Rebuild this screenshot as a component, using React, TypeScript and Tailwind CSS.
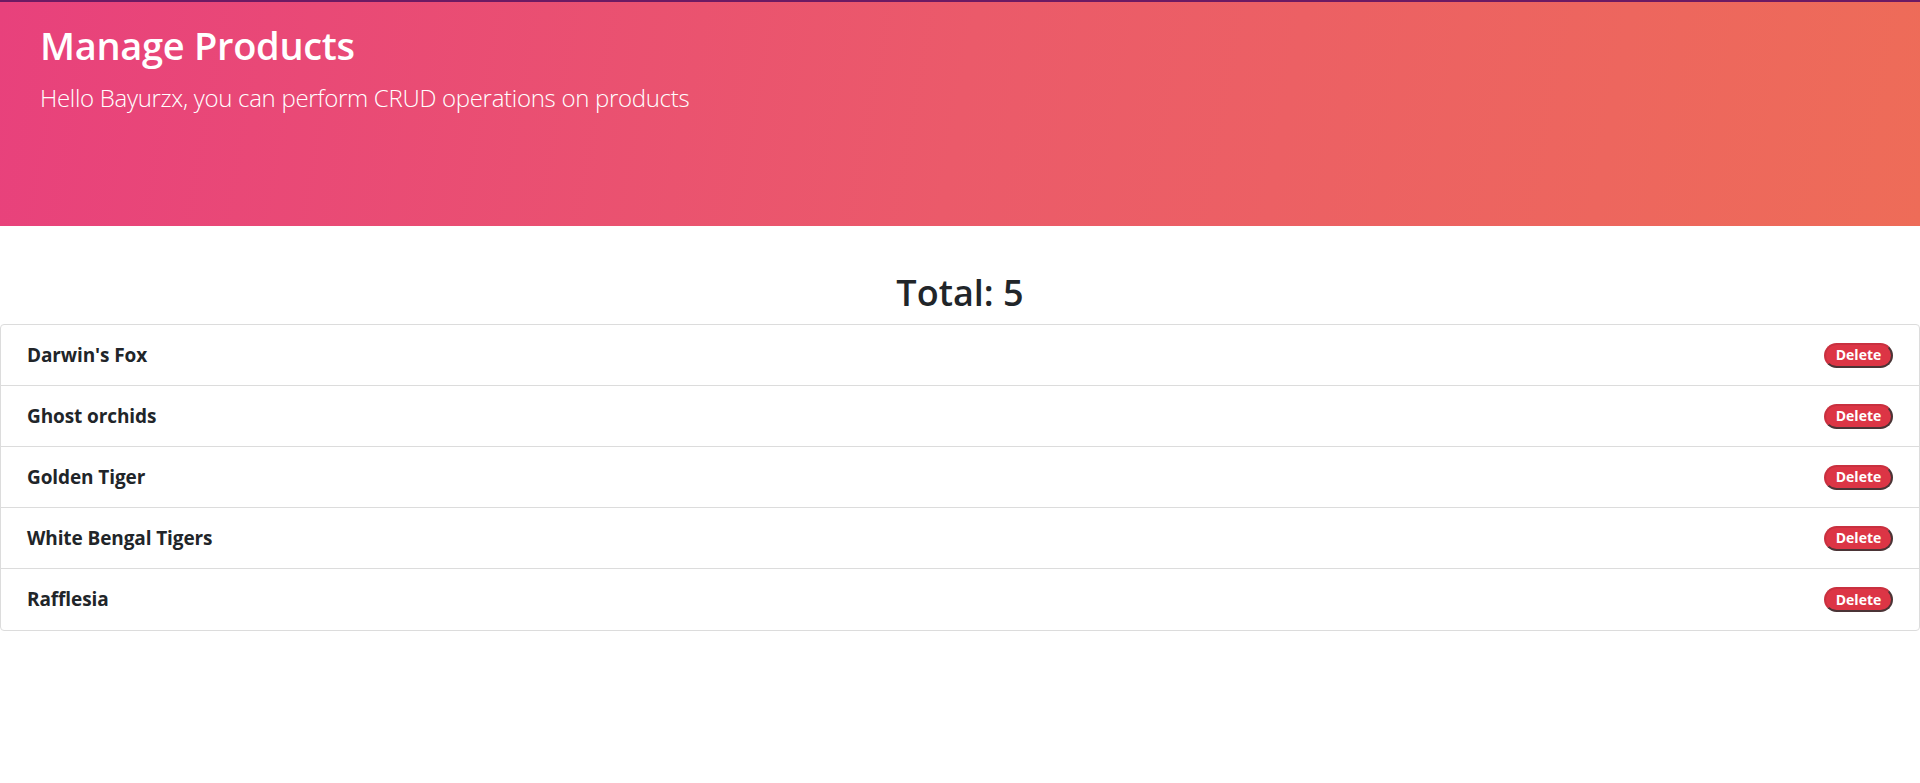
import React from "react";

const products = ["Darwin's Fox", "Ghost orchids", "Golden Tiger", "White Bengal Tigers", "Rafflesia"];

export default function App() {
  return (
    <div className="min-h-screen bg-white text-[#212529] font-['Open_Sans',sans-serif]">
      <div className="h-[226px] border-t-2 border-[#6d1a63] bg-[linear-gradient(100deg,#e8417c_0%,#eb5a6a_50%,#ee6c58_100%)] pl-[40px] pt-[19px] text-white">
        <h1 className="text-[38px] leading-[48px] font-semibold tracking-[-0.3px]">Manage Products</h1>
        <p className="mt-[11px] text-[24px] leading-[36px] font-light tracking-[-0.3px]">
          Hello Bayurzx, you can perform CRUD operations on products
        </p>
      </div>

      <h2 className="mt-[44px] text-center text-[36px] leading-[45px] font-semibold">Total: {products.length}</h2>

      <ul className="mt-[9px] rounded border border-[#dcdcdc] divide-y divide-[#dcdcdc]">
        {products.map((p) => (
          <li key={p} className="flex h-[61px] items-center justify-between pl-[26px] pr-[26px]">
            <span className="text-[19px] font-bold tracking-[-0.1px]">{p}</span>
            <button className="h-[25px] w-[69px] rounded-full border-2 border-t-[#c9303f] border-l-[#c9303f] border-r-[#4b3436] border-b-[#4b3436] bg-[#dc3545] text-[14px] font-bold leading-none text-white">
              Delete
            </button>
          </li>
        ))}
      </ul>
    </div>
  );
}
